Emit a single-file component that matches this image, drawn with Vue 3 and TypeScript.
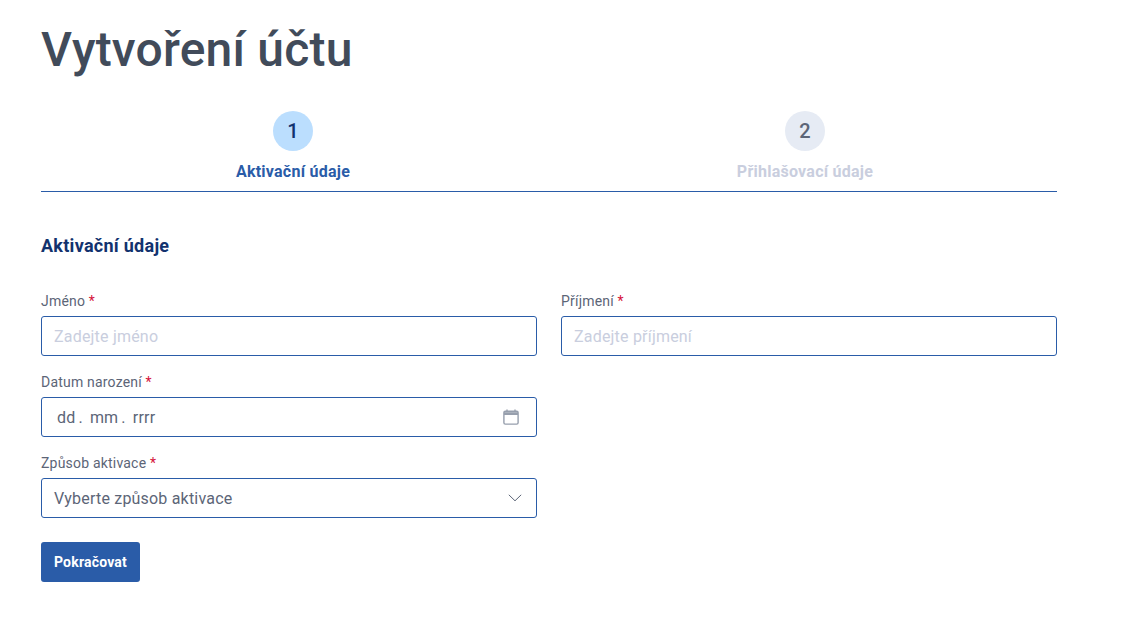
<script setup lang="ts">
interface Step { n: number; label: string; active: boolean }
const steps: Step[] = [
  { n: 1, label: 'Aktivační údaje', active: true },
  { n: 2, label: 'Přihlašovací údaje', active: false },
]
</script>

<template>
  <main class="page">
    <h1 class="title">Vytvoření účtu</h1>
    <div class="stepper">
      <div v-for="s in steps" :key="s.n" class="step" :class="{ active: s.active }">
        <span class="circle">{{ s.n }}</span>
        <span class="step-label">{{ s.label }}</span>
      </div>
    </div>
    <h2 class="section">Aktivační údaje</h2>
    <form class="form" @submit.prevent>
      <div class="row">
        <div class="field">
          <label class="label">Jméno <i>*</i></label>
          <div class="control placeholder">Zadejte jméno</div>
        </div>
        <div class="field">
          <label class="label">Příjmení <i>*</i></label>
          <div class="control placeholder">Zadejte příjmení</div>
        </div>
      </div>
      <div class="row">
        <div class="field">
          <label class="label">Datum narození <i>*</i></label>
          <div class="control date">
            <span class="date-text"><span>dd</span><span class="dot">.</span><span>mm</span><span class="dot">.</span><span>rrrr</span></span>
            <svg class="cal" width="16" height="16" viewBox="0 0 16 16" fill="none" stroke="#979fad" stroke-width="1.4">
              <rect x="0.9" y="2.2" width="14.2" height="12.9" rx="1.4" />
              <path d="M1 3.2h14V6H1z" fill="#979fad" stroke="none" />
              <path d="M4 0.4v2.6M12 0.4v2.6" stroke-width="1.4" />
            </svg>
          </div>
        </div>
        <div class="field"></div>
      </div>
      <div class="row">
        <div class="field">
          <label class="label">Způsob aktivace <i>*</i></label>
          <div class="control select">
            <span>Vyberte způsob aktivace</span>
            <svg width="14" height="8" viewBox="0 0 14 8" fill="none" stroke="#5c6577" stroke-width="1">
              <path d="M0.8 0.8 7 6.8l6.2-6" />
            </svg>
          </div>
        </div>
        <div class="field"></div>
      </div>
      <button type="button" class="btn">Pokračovat</button>
    </form>
  </main>
</template>

<style>
html, body { margin: 0; background: #fff; }
</style>

<style scoped>
.page {
  width: 1016px;
  padding: 22px 0 0 41px;
  font-family: Roboto, "Noto Sans", sans-serif;
  color: #414b5a;
  letter-spacing: 0.2px;
}
.title {
  margin: 0;
  font-size: 48px;
  line-height: 56px;
  font-weight: 500;
  color: #414b5a;
}
.stepper {
  display: grid;
  grid-template-columns: 1fr 1fr;
  gap: 8px;
  margin-top: 33px;
  padding-bottom: 10px;
  border-bottom: 1px solid #2a5ca8;
}
.step {
  display: flex;
  flex-direction: column;
  align-items: center;
}
.circle {
  width: 40px;
  height: 40px;
  border-radius: 50%;
  background: #e6ebf4;
  color: #5c6577;
  font-size: 20px;
  font-weight: 500;
  display: flex;
  align-items: center;
  justify-content: center;
}
.step.active .circle {
  background: #bbdefe;
  color: #12326e;
}
.step-label {
  margin-top: 11px;
  font-size: 16px;
  line-height: 19px;
  font-weight: 700;
  color: #c9cede;
  letter-spacing: 0.25px;
}
.step.active .step-label { color: #2a5ca8; }
.section {
  margin: 43px 0 0;
  font-size: 18px;
  line-height: 21px;
  font-weight: 700;
  color: #12326e;
  letter-spacing: 0.27px;
}
.form { margin-top: 37px; }
.row {
  display: grid;
  grid-template-columns: 1fr 1fr;
  gap: 24px;
  margin-bottom: 18px;
}
.field { min-width: 0; }
.label {
  display: block;
  height: 16px;
  margin-bottom: 7px;
  font-size: 14px;
  line-height: 16px;
  color: #5c6577;
}
.label i {
  font-style: normal;
  color: #d5133a;
}
.control {
  box-sizing: border-box;
  height: 40px;
  padding: 0 12px;
  border: 1px solid #2a5ca8;
  border-radius: 3px;
  display: flex;
  align-items: center;
  justify-content: space-between;
  font-size: 16px;
  color: #5c6577;
}
.placeholder { color: #c9cede; }
.date { padding: 0 17px 0 15px; }
.date-text { display: flex; letter-spacing: 0.2px; }
.dot { margin: 0 7px 0 3px; }
.cal { display: block; }
.select { padding-right: 14px; }
.btn {
  display: block;
  height: 40px;
  width: 99px;
  margin-top: 24px;
  padding: 0;
  border: 0;
  border-radius: 3px;
  background: #2a5ca8;
  color: #fff;
  font-family: inherit;
  font-size: 14px;
  font-weight: 700;
  letter-spacing: 0.2px;
}
</style>
